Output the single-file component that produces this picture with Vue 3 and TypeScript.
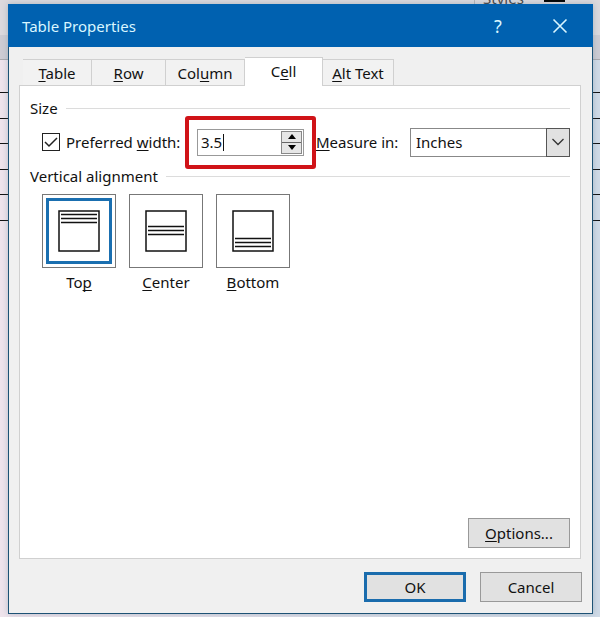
<script setup lang="ts">
import { ref } from 'vue'

interface Label {
  pre: string
  key: string
  post: string
}
interface Align extends Label {
  id: string
  lines: number[]
}

const tabs: (Label & { id: string })[] = [
  { id: 'table', pre: '', key: 'T', post: 'able' },
  { id: 'row', pre: '', key: 'R', post: 'ow' },
  { id: 'column', pre: 'Col', key: 'u', post: 'mn' },
  { id: 'cell', pre: 'C', key: 'e', post: 'll' },
  { id: 'alt', pre: '', key: 'A', post: 'lt Text' },
]
const aligns: Align[] = [
  { id: 'top', pre: 'To', key: 'p', post: '', lines: [4, 8, 12] },
  { id: 'center', pre: '', key: 'C', post: 'enter', lines: [16, 20, 24] },
  { id: 'bottom', pre: '', key: 'B', post: 'ottom', lines: [28, 32, 36] },
]

const activeTab = ref('cell')
const alignment = ref('top')
const usePreferred = ref(true)
const width = ref('3.5')
const unit = ref('Inches')

function step(delta: number): void {
  width.value = String(Math.max(0, Math.round((Number(width.value) + delta) * 10) / 10))
}
</script>

<template>
  <div class="desktop">
    <div class="ribbon" aria-hidden="true"><span class="ribbon-label">Styles</span><span class="swatch"></span></div>
    <div class="sheet" aria-hidden="true"><i v-for="n in 6" :key="n"></i></div>
    <section class="dialog" role="dialog" aria-labelledby="dialog-title">
      <header class="titlebar">
        <h1 id="dialog-title">Table Properties</h1>
        <button class="title-button" type="button" aria-label="Help">?</button>
        <button class="title-button" type="button" aria-label="Close">
          <svg width="16" height="16" viewBox="0 0 16 16"><path d="M1.5 1.5L14.5 14.5M14.5 1.5L1.5 14.5" fill="none" stroke="#d9f6ff" stroke-width="1.6" /></svg>
        </button>
      </header>

      <div class="body">
        <div class="tabs" role="tablist">
          <button
            v-for="tab in tabs"
            :key="tab.id"
            type="button"
            role="tab"
            :class="['tab', tab.id, { active: activeTab === tab.id }]"
            :aria-selected="activeTab === tab.id"
            @click="activeTab = tab.id"
          >{{ tab.pre }}<u>{{ tab.key }}</u>{{ tab.post }}</button>
        </div>

        <div class="panel" role="tabpanel">
          <h2 class="group-title">Size</h2>
          <div class="size-row">
            <label class="check">
              <input v-model="usePreferred" type="checkbox" />
              <svg class="box" width="18" height="18" viewBox="0 0 18 18">
                <rect x="0.5" y="0.5" width="17" height="17" fill="#fff" stroke="#222" />
                <path v-if="usePreferred" d="M3 9L7 13L15 5" fill="none" stroke="#222" stroke-width="1.5" />
              </svg>
              <span>Preferred <u>w</u>idth:</span>
            </label>
            <div class="highlight">
              <div class="spinner">
                <input v-model="width" class="spin-input" type="text" aria-label="Preferred width" />
                <span class="caret" aria-hidden="true"></span>
                <div class="spin-buttons">
                  <button type="button" aria-label="Increase" @click="step(0.1)">
                    <svg width="8" height="5" viewBox="0 0 8 5"><path d="M4 0L8 5H0Z" /></svg>
                  </button>
                  <button type="button" aria-label="Decrease" @click="step(-0.1)">
                    <svg width="8" height="5" viewBox="0 0 8 5"><path d="M4 5L8 0H0Z" /></svg>
                  </button>
                </div>
              </div>
            </div>
            <label class="measure" for="unit"><u>M</u>easure in:</label>
            <div class="combo">
              <select id="unit" v-model="unit">
                <option>Inches</option>
                <option>Percent</option>
              </select>
              <span class="arrow" aria-hidden="true">
                <svg width="14" height="8" viewBox="0 0 14 8"><path d="M1.5 1L7 6.5L12.5 1" fill="none" stroke="#333" stroke-width="1.3" /></svg>
              </span>
            </div>
          </div>

          <h2 class="group-title">Vertical alignment</h2>
          <div class="aligns">
            <button
              v-for="a in aligns"
              :key="a.id"
              type="button"
              class="align"
              :aria-pressed="alignment === a.id"
              @click="alignment = a.id"
            >
              <span :class="['tile', { selected: alignment === a.id }]">
                <svg width="42" height="42" viewBox="0 0 42 42">
                  <rect x="1" y="1" width="40" height="40" fill="#fff" stroke="#111" stroke-width="1.5" />
                  <path v-for="y in a.lines" :key="y" :d="`M3 ${y + 0.5}H39`" stroke="#111" stroke-width="1.3" />
                </svg>
              </span>
              <span>{{ a.pre }}<u>{{ a.key }}</u>{{ a.post }}</span>
            </button>
          </div>

          <button class="button options" type="button"><u>O</u>ptions...</button>
        </div>

        <footer class="actions">
          <button class="button primary" type="button">OK</button>
          <button class="button" type="button">Cancel</button>
        </footer>
      </div>
    </section>
  </div>
</template>

<style>
body {
  margin: 0;
}
</style>

<style scoped>
* {
  box-sizing: border-box;
}
.desktop {
  position: relative;
  display: flex;
  min-height: 100vh;
  padding: 4px 7px 3px 8px;
  overflow: hidden;
  font-family: "Noto Sans", "Open Sans", sans-serif;
  font-size: 15px;
  line-height: 20px;
  color: #111;
  background: linear-gradient(90deg, #efe4ec, #cfdae6);
}
.ribbon {
  position: absolute;
  inset: 0 0 auto;
  height: 60px;
  background: linear-gradient(#dcd9dd 0 35px, #cdccd3 35px 59px, #a9a9ae 59px);
}
.ribbon-label {
  position: absolute;
  top: -12px;
  left: 474px;
  padding-left: 8px;
  border-left: 1px solid #b5b5b8;
  color: #444;
}
.swatch {
  position: absolute;
  top: 0;
  left: 544px;
  width: 21px;
  height: 2px;
  background: #000;
}
.sheet {
  position: absolute;
  inset: 92px 0 auto;
  display: flex;
  flex-direction: column;
  justify-content: space-between;
  height: 129px;
}
.sheet i {
  height: 1px;
  background: #111;
}
.dialog {
  position: relative;
  display: flex;
  flex: 1;
  flex-direction: column;
  border: 1px solid #1d5275;
  background: #f0f0f0;
  box-shadow: 0 0 6px #5a7a9060;
}
.titlebar {
  display: flex;
  align-items: center;
  height: 43px;
  padding: 0 9px 0 14px;
  margin: -1px -1px 0;
  color: #d9f6ff;
  background: #0061b0;
}
h1,
h2 {
  margin: 0;
  font-size: inherit;
  font-weight: 400;
}
h1 {
  flex: 1;
}
button {
  padding: 0;
  border: 0;
  font: inherit;
  color: inherit;
  background: none;
}
u {
  text-underline-offset: 2px;
  text-decoration-thickness: 1px;
  text-decoration-skip-ink: none;
}
.title-button {
  display: flex;
  align-items: center;
  justify-content: center;
  width: 76px;
  height: 42px;
  font-size: 18px;
}
.title-button:last-child {
  width: 48px;
}
.body {
  display: flex;
  flex: 1;
  flex-direction: column;
  padding: 10px 10px 11px;
}
.tabs {
  display: flex;
  align-items: flex-end;
  padding-left: 4px;
}
.tab {
  height: 26px;
  border: solid #d0d0d0;
  border-width: 1px 1px 0 0;
  background: #f2f2f2;
}
.table {
  width: 69px;
}
.row {
  width: 74px;
}
.column {
  width: 79px;
}
.cell {
  width: 78px;
}
.alt {
  width: 71px;
}
.tab.active {
  position: relative;
  height: 29px;
  margin-bottom: -1px;
  padding-bottom: 2px;
  background: #fff;
}
.panel {
  display: flex;
  flex: 1;
  flex-direction: column;
  padding: 12px 10px 10px;
  margin-right: 1px;
  border: 1px solid #d0d0d0;
  background: #fff;
}
.group-title {
  display: flex;
  align-items: center;
  gap: 8px;
}
.group-title::after {
  flex: 1;
  height: 1px;
  background: #dcdcdc;
  content: "";
}
.size-row {
  display: flex;
  align-items: center;
  height: 48px;
  padding-left: 12px;
}
.check {
  display: flex;
  align-items: center;
  gap: 6px;
  width: 143px;
  white-space: nowrap;
}
.check input {
  position: absolute;
  width: 18px;
  height: 18px;
  margin: 0;
  opacity: 0;
}
.highlight {
  width: 131px;
  height: 53px;
  padding: 9px 8px;
  border: 4px solid #d01318;
  border-radius: 3px;
}
.spinner {
  position: relative;
  display: flex;
  height: 27px;
  border: 1px solid #999;
}
.spin-input {
  flex: 1;
  min-width: 0;
  padding: 0 3px;
  border: 0;
  font: inherit;
  color: inherit;
  background: none;
  outline: 0;
}
.caret {
  position: absolute;
  top: 4px;
  left: 25px;
  width: 1px;
  height: 17px;
  background: #111;
}
.spin-buttons {
  display: flex;
  flex-direction: column;
  width: 21px;
  margin: 1px;
  border: 1px solid #888;
}
.spin-buttons button {
  display: flex;
  flex: 1;
  align-items: center;
  justify-content: center;
  background: #e6e6e6;
}
.spin-buttons button + button {
  border-top: 1px solid #666;
}
.measure {
  width: 94px;
  white-space: nowrap;
}
.combo {
  position: relative;
  flex: 1;
  height: 29px;
}
.combo select {
  width: 100%;
  height: 100%;
  padding: 0 28px 0 5px;
  border: 1px solid #888;
  border-radius: 0;
  font: inherit;
  color: inherit;
  background: #fff;
  appearance: none;
}
.arrow {
  position: absolute;
  inset: 0 0 0 auto;
  display: flex;
  align-items: center;
  justify-content: center;
  width: 24px;
  border: 1px solid #555;
  background: #e1e1e1;
  pointer-events: none;
}
.aligns {
  display: flex;
  gap: 13px;
  padding: 8px 0 0 12px;
}
.align {
  display: flex;
  flex-direction: column;
  gap: 4px;
  align-items: center;
}
.tile {
  position: relative;
  display: flex;
  align-items: center;
  justify-content: center;
  width: 74px;
  height: 74px;
  border: 1px solid #777;
}
.tile.selected::before {
  position: absolute;
  inset: 3px;
  border: 3px solid #1a6fb0;
  content: "";
}
.button {
  width: 102px;
  height: 30px;
  border: 1px solid #999;
  background: #e1e1e1;
}
.options {
  align-self: flex-end;
  margin-top: auto;
}
.actions {
  display: flex;
  gap: 14px;
  justify-content: flex-end;
  padding-top: 13px;
}
.primary {
  border: 3px solid #1a6cad;
}
</style>
